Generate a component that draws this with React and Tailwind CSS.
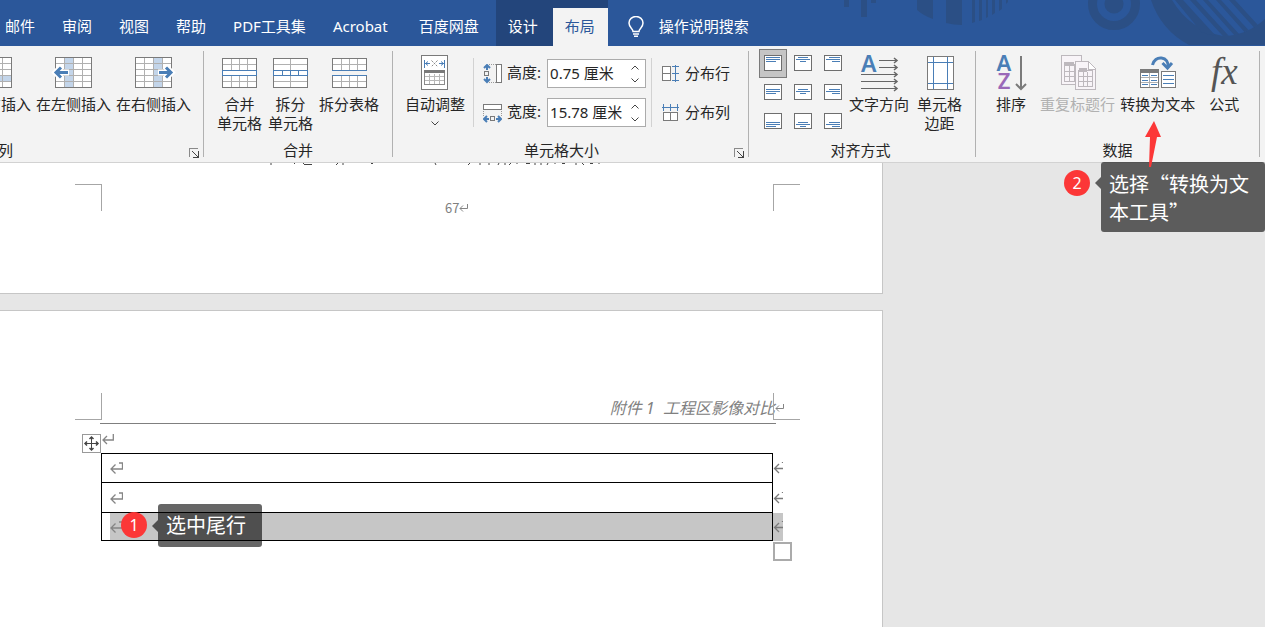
import React, { useState } from "react";

const BLUE = "#4a7eb6";
const GRAY = "#7a7a7a";

const tabs = ["邮件", "审阅", "视图", "帮助", "PDF工具集", "Acrobat", "百度网盘"];

/* ---------- ribbon icons ---------- */

const Icon = ({ children }) => (
  <svg
    width="37"
    height="39"
    viewBox="0 0 37 39"
    fill="none"
    className="block shrink-0 overflow-visible"
    aria-hidden="true"
  >
    {children}
  </svg>
);

const InsertTable = ({ children, highlight }) => (
  <Icon>
    <g shapeRendering="crispEdges">
      <rect x="0.5" y="1.5" width="36" height="30" fill="#fff" />
      {highlight}
      <path
        d="M9.5 2v29M18.5 2v29M27.5 2v29M1 7.5h35M1 13.5h35M1 19.5h35M1 25.5h35"
        stroke="#b0b0b0"
      />
      <rect x="0.5" y="1.5" width="36" height="30" stroke={GRAY} />
    </g>
    {children}
  </Icon>
);

const InsertBelowIcon = () => (
  <InsertTable highlight={<rect x="1" y="20" width="35" height="5" fill="#c3d5ea" />} />
);

const InsertLeftIcon = () => (
  <InsertTable highlight={<rect x="10" y="2" width="8" height="29" fill="#c3d5ea" />}>
    <path d="M14 16.5H2M6 11L0.5 16.5 6 22" stroke="#fff" strokeWidth="6" />
    <path d="M13 16.5H2M6 11.5l-5 5 5 5" stroke={BLUE} strokeWidth="3" />
  </InsertTable>
);

const InsertRightIcon = () => (
  <InsertTable highlight={<rect x="19" y="2" width="8" height="29" fill="#c3d5ea" />}>
    <path d="M23 16.5h12M31 11l5.5 5.5L31 22" stroke="#fff" strokeWidth="6" />
    <path d="M24 16.5h11M31 11.5l5 5-5 5" stroke={BLUE} strokeWidth="3" />
  </InsertTable>
);

const MergeCellsIcon = () => (
  <Icon>
    <g shapeRendering="crispEdges">
      <rect x="1.5" y="2.5" width="34" height="29" fill="#fff" />
      <path
        d="M10.5 3v11M18.5 3v11M26.5 3v11M10.5 20v11M18.5 20v11M26.5 20v11M2 8.5h33M2 25.5h33"
        stroke="#b0b0b0"
      />
      <rect x="1.5" y="2.5" width="34" height="29" stroke={GRAY} />
      <rect x="1.5" y="14.5" width="34" height="5" fill="#fff" stroke={BLUE} />
    </g>
  </Icon>
);

const SplitCellsIcon = () => (
  <Icon>
    <g shapeRendering="crispEdges">
      <rect x="1.5" y="2.5" width="34" height="29" fill="#fff" />
      <path d="M18.5 3v28M2 8.5h33M2 25.5h33" stroke="#b0b0b0" />
      <rect x="1.5" y="2.5" width="34" height="29" stroke={GRAY} />
      <rect x="1.5" y="14.5" width="34" height="5" fill="#fff" stroke={BLUE} />
      <path d="M10.5 15v4M18.5 15v4M26.5 15v4" stroke={BLUE} />
    </g>
  </Icon>
);

const SplitTableIcon = () => (
  <Icon>
    <g shapeRendering="crispEdges">
      <rect x="1.5" y="2.5" width="34" height="12" fill="#fff" stroke={GRAY} />
      <rect x="1.5" y="19.5" width="34" height="12" fill="#fff" stroke={GRAY} />
      <path
        d="M10.5 3v11M18.5 3v11M26.5 3v11M10.5 20v11M18.5 20v11M26.5 20v11M2 8.5h33M2 25.5h33"
        stroke="#b0b0b0"
      />
      <path d="M1 14.5h35M1 19.5h35" stroke={BLUE} />
    </g>
  </Icon>
);

const AutoFitIcon = () => (
  <Icon>
    <g shapeRendering="crispEdges">
      <rect x="4.5" y="-0.5" width="26" height="34" fill="#fff" stroke={GRAY} />
      <path d="M7.5 4v8M27.5 4v8M8 7.5h5M22 7.5h5" stroke={BLUE} />
      <rect x="7.5" y="15.5" width="20" height="13" fill="#fff" stroke="#8a8a8a" />
      <rect x="7" y="14" width="21" height="3" fill={GRAY} />
      <path d="M12.5 18v10M17.5 18v10M22.5 18v10M8 20.5h19M8 24.5h19" stroke="#b8b8b8" />
    </g>
    <path d="M11 5.5l-2.5 2 2.5 2M24 5.5l2.5 2-2.5 2" stroke={BLUE} />
    <path d="M14.5 4.5l6 6M20.5 4.5l-6 6" stroke="#888" strokeDasharray="2 1" />
  </Icon>
);

const TextDirectionIcon = () => (
  <Icon>
    <text x="0" y="16" fontSize="23" fontWeight="600" fontFamily="Noto Sans, sans-serif" fill={BLUE}>
      A
    </text>
    <path
      d="M18 4.5h18M18 11.5h18M0 18.5h36M0 25.5h36M0 32.5h36"
      stroke="#666"
      shapeRendering="crispEdges"
    />
    <path
      d="M33 2l3 2.5-3 2.5M33 9l3 2.5-3 2.5M33 16l3 2.5-3 2.5M33 23l3 2.5-3 2.5M33 30l3 2.5-3 2.5"
      stroke="#666"
      strokeWidth="1.5"
    />
  </Icon>
);

const CellMarginsIcon = () => (
  <Icon>
    <g shapeRendering="crispEdges">
      <rect x="6.5" y="0.5" width="26" height="33" fill="#fff" stroke={GRAY} />
      <path d="M12.5 1v32M26.5 1v32M7 6.5h25M7 27.5h25" stroke={BLUE} />
    </g>
  </Icon>
);

const SortIcon = () => (
  <span className="flex h-[39px] w-[37px] justify-between pl-1" aria-hidden="true">
    <span className="-mt-[3px] flex flex-col text-center text-[22px] font-semibold leading-[18px]">
      <span className="text-[#4a7eb6]">A</span>
      <span className="text-[#9a68b8]">Z</span>
    </span>
    <svg width="16" height="39" viewBox="0 0 16 39" fill="none">
      <path d="M7 0v33M2 28l5 5 5-5" stroke={GRAY} strokeWidth="2" />
    </svg>
  </span>
);

const RepeatHeaderIcon = () => (
  <Icon>
    <g shapeRendering="crispEdges" stroke="#bdb8bd">
      <path d="M2.5 -0.5h20v29h-20z" fill="#f8f4f8" />
      <path d="M5.5 8.5h10v17h-10zM10.5 10v15M6 15.5h9M6 20.5h9" />
      <path d="M5 8h10" strokeWidth="4" />
      <path d="M16.5 5.5h13l7 7v21h-20z" fill="#f8f4f8" />
      <path d="M19.5 14.5h14v16h-14zM24.5 16v14M28.5 16v14M20 20.5h13M20 25.5h13" />
      <path d="M20 14h8" strokeWidth="4" />
      <path d="M29.5 6v7h7" fill="#fff" />
    </g>
  </Icon>
);

const ConvertToTextIcon = () => (
  <Icon>
    <path d="M13.5 9c1-5 5-7.5 9-7 4.5 0.5 7 4 6.5 9" stroke={BLUE} strokeWidth="3" />
    <path d="M23.5 7l5 5 4.5-5" stroke={BLUE} strokeWidth="3" />
    <g shapeRendering="crispEdges">
      <rect x="1.5" y="14.5" width="18" height="17" fill="#fff" stroke={GRAY} />
      <rect x="1" y="13" width="19" height="4" fill={GRAY} />
      <path d="M10.5 17v14M2 21.5h17M2 26.5h17" stroke="#b0b0b0" />
      <path d="M3 19.5h6M3 24.5h6M3 28.5h6M12 19.5h6M12 24.5h6M12 28.5h6" stroke={BLUE} />
      <rect x="22.5" y="15.5" width="14" height="16" fill="#fff" stroke={GRAY} />
      <path d="M24 19.5h11M24 23.5h11M24 27.5h11" stroke={BLUE} />
    </g>
  </Icon>
);

const FormulaIcon = () => (
  <Icon>
    <text x="5" y="28" fontSize="37" fontStyle="italic" fontFamily="Liberation Serif, serif" fill="#555">
      fx
    </text>
  </Icon>
);

const HeightIcon = () => (
  <svg width="19" height="20" viewBox="0 0 19 20" fill="none" aria-hidden="true">
    <g shapeRendering="crispEdges">
      <path d="M4 1v5M4 13v5" stroke={BLUE} strokeWidth="2" />
      <rect x="1.5" y="7.5" width="4" height="4" stroke={GRAY} />
      <path d="M6 0.5h7M6 18.5h7" stroke="#999" strokeDasharray="1 1" />
      <rect x="13.5" y="0.5" width="5" height="18" fill="#fff" stroke={GRAY} />
    </g>
    <path d="M1 4l3-3 3 3M1 15l3 3 3-3" stroke={BLUE} strokeWidth="2" />
  </svg>
);

const WidthIcon = () => (
  <svg width="19" height="20" viewBox="0 0 19 20" fill="none" aria-hidden="true">
    <g shapeRendering="crispEdges">
      <rect x="0.5" y="1.5" width="18" height="5" fill="#fff" stroke={GRAY} />
      <path d="M0.5 8v6M18.5 8v6" stroke="#999" strokeDasharray="1 1" />
      <rect x="7.5" y="13.5" width="4" height="4" stroke={GRAY} />
      <path d="M1 16h5M13 16h5" stroke={BLUE} strokeWidth="2" />
    </g>
    <path d="M4 13l-3 3 3 3M15 13l3 3-3 3" stroke={BLUE} strokeWidth="2" />
  </svg>
);

const DistributeRowsIcon = () => (
  <svg width="18" height="18" viewBox="0 0 18 18" fill="none" shapeRendering="crispEdges" aria-hidden="true">
    <path d="M0.5 1.5h8v14h-8zM1 8.5h7" fill="#fff" stroke={GRAY} />
    <path d="M13.5 0v17M10 1.5h7M10 8.5h7M10 15.5h7" stroke={BLUE} />
  </svg>
);

const DistributeColsIcon = () => (
  <svg width="18" height="18" viewBox="0 0 18 18" fill="none" shapeRendering="crispEdges" aria-hidden="true">
    <path d="M1.5 8.5h14v8h-14zM8.5 9v7" fill="#fff" stroke={GRAY} />
    <path d="M0 3.5h17M1.5 0v7M8.5 0v7M15.5 0v7" stroke={BLUE} />
  </svg>
);

const lineTop = { top: 2, middle: 5, bottom: 9 };
const lineWidths = {
  left: [14, 14, 10],
  center: [10, 14, 6],
  right: [11, 14, 8],
};

const AlignIcon = ({ v, h }) => {
  const lines = lineWidths[h].map((len, i) => {
    const x = h === "left" ? 2 : h === "center" ? 9 - len / 2 : 16 - len;
    return `M${x} ${lineTop[v] + i * 2 + 0.5}h${len}`;
  });
  return (
    <svg width="18" height="16" viewBox="0 0 18 16" fill="none" shapeRendering="crispEdges" aria-hidden="true">
      <rect x="0.5" y="0.5" width="17" height="15" fill="#fff" stroke="#6e6e6e" />
      <path d={lines.join("")} stroke={BLUE} />
    </svg>
  );
};

const Chevron = ({ up }) => (
  <svg width="8" height="5" viewBox="0 0 8 5" fill="none" aria-hidden="true">
    <path d={up ? "M0.5 4.5L4 1l3.5 3.5" : "M0.5 0.5L4 4l3.5-3.5"} stroke="#444" />
  </svg>
);

/* ---------- ribbon parts ---------- */

const BigButton = ({ icon, lines, disabled, dropDown }) => (
  <button
    type="button"
    disabled={disabled}
    className="flex h-full flex-col items-center pt-[10px] leading-[19px] whitespace-nowrap disabled:text-[#b1b1b1]"
  >
    {icon}
    {lines.map((line) => (
      <span key={line}>{line}</span>
    ))}
    {dropDown && (
      <span className="flex h-[19px] items-center">
        <Chevron />
      </span>
    )}
  </button>
);

const Group = ({ label, launcher, className = "", children }) => (
  <section className="flex shrink-0" aria-label={label}>
    <div className={`flex flex-col ${className}`}>
      <div className="flex h-[94px]">{children}</div>
      <div className="text-center leading-5">{label}</div>
    </div>
    {launcher && (
      <button type="button" aria-label={`${label}设置`} className="-ml-[14px] mt-[102px] h-[10px] w-[14px]">
        <svg width="10" height="10" viewBox="0 0 10 10" fill="none" shapeRendering="crispEdges">
          <path d="M0.5 9V0.5H9" stroke="#8a8a8a" />
          <path d="M9.5 3v6.5H4M3 3l6 6" stroke="#444" />
        </svg>
      </button>
    )}
    <div className="mt-[5px] h-[106px] w-px bg-[#b1b1b1]" />
  </section>
);

const SizeField = ({ id, icon, label, value }) => {
  const [size, setSize] = useState(value);
  return (
    <div className="flex h-[39px] items-center">
      {icon}
      <label htmlFor={id} className="ml-[5px] w-10 whitespace-nowrap pb-[2px]">
        {label}
      </label>
      <div className="flex h-[29px] w-[99px] items-center border border-[#ababab] bg-white">
        <input
          id={id}
          value={size}
          onChange={(e) => setSize(e.target.value)}
          className="h-full w-[83px] min-w-0 bg-transparent pb-[2px] pl-[2px] outline-none"
        />
        <span className="flex flex-col gap-2">
          <button type="button" aria-label="增加" className="flex">
            <Chevron up />
          </button>
          <button type="button" aria-label="减少" className="flex">
            <Chevron />
          </button>
        </span>
      </div>
    </div>
  );
};

const SmallButton = ({ icon, label }) => (
  <button type="button" className="flex h-[39px] items-center gap-[5px] whitespace-nowrap">
    {icon}
    {label}
  </button>
);

const HeaderArt = () => (
  <svg width="425" height="46" viewBox="0 0 425 46" fill="#2b4f85" className="absolute right-0 top-0" aria-hidden="true">
    <defs>
      <clipPath id="disc">
        <circle cx="383" cy="-24" r="60" />
      </clipPath>
    </defs>
    <path d="M4 0h5v7H4zM21 0h6v17h-6zM31 0h5v3h-5z" />
    <path d="M77 0h16v19q-9-3-16-9zM106 0h16v25q-8 0-16-2z" />
    <path d="M132 0h3v22l-3 1zM139 0h3v20l-3 1zM146 0h2v17l-2 1zM152 0h3v13l-3 2zM159 0h3v9l-3 2zM166 0h2v2l-2 2z" />
    <circle cx="274" cy="4" r="21.5" fill="none" stroke="#2b4f85" strokeWidth="9" />
    <circle cx="274" cy="4" r="9.5" />
    <path d="M311 0Q321 30 349 45h76V19Q406 36 383 36Q350 30 332 0z" />
    <g clipPath="url(#disc)">
      <path d="M335 0h8l42 46h-12zM350 0h6l42 46h-6zM363 0h5l42 46h-6zM376 0h5l42 46h-6zM389 0h6l42 46h-6z" />
    </g>
  </svg>
);

/* ---------- document parts ---------- */

const CropMark = ({ d }) => (
  <svg width="27" height="27" viewBox="0 0 27 27" fill="none" shapeRendering="crispEdges" aria-hidden="true">
    <path d={d} stroke="#a6a6a6" />
  </svg>
);

const ReturnMark = () => (
  <svg width="13" height="12" viewBox="0 0 13 12" fill="none" stroke="#858585" strokeWidth="1.3" aria-hidden="true">
    <path d="M9 1h3.5v6H1M5.5 2.5L1 7l4.5 4.5" />
  </svg>
);

const ParagraphMark = () => (
  <svg
    width="12"
    height="11"
    viewBox="0 0 12 11"
    fill="none"
    stroke="#858585"
    strokeWidth="1.3"
    className="shrink-0"
    aria-hidden="true"
  >
    <path d="M11.3 0v6H1M5 2L1 6l4 4" />
  </svg>
);

const SmallParagraphMark = () => (
  <svg width="9" height="8" viewBox="0 0 9 8" fill="none" stroke="#858585" className="shrink-0" aria-hidden="true">
    <path d="M8.5 0v4.5H1M4 1.5l-3 3 3 3" />
  </svg>
);

const RowEndMark = () => (
  <svg width="10" height="12" viewBox="0 0 10 12" fill="none" stroke="#7a7a7a" strokeWidth="1.3" aria-hidden="true">
    <path d="M10 6.5H1.5M6 2L1.5 6.5 6 11M9.5 0v1" />
  </svg>
);

const Callout = ({ className, children }) => (
  <div className={`absolute flex items-center text-xl leading-7 text-white ${className}`}>
    <span className="h-0 w-0 shrink-0 border-y-[6px] border-r-[6px] border-y-transparent border-r-black/60" />
    <p className="flex-1 rounded-[3px] bg-black/60 px-2 pb-[7px] pt-2">{children}</p>
  </div>
);

const Badge = ({ className, children }) => (
  <span
    className={`absolute flex h-[26px] w-[26px] items-center justify-center rounded-full bg-[#fc3737] text-base leading-none text-white ${className}`}
  >
    {children}
  </span>
);

const alignments = ["top", "middle", "bottom"].flatMap((v) =>
  ["left", "center", "right"].map((h) => ({ v, h }))
);

const rows = [
  { height: "h-[30px]", selected: false, first: true },
  { height: "h-[30px]", selected: false },
  { height: "h-[28px]", selected: true },
];

const App = () => {
  const [align, setAlign] = useState("top-left");

  return (
    <div className="relative flex h-screen flex-col overflow-hidden bg-[#e6e6e6] font-['Noto_Sans','Noto_Sans_CJK_SC',sans-serif] text-[15px] text-[#262626]">
      <header className="relative h-[46px] shrink-0 bg-[#2b579a] text-white">
        <HeaderArt />
        <nav className="relative -ml-[7px] flex h-full items-end gap-[3px] whitespace-nowrap leading-9">
          {tabs.map((tab) => (
            <a key={tab} href="#" className={`pb-[2px] pl-3 ${tab === "Acrobat" ? "pr-4" : "pr-3"}`}>
              {tab}
            </a>
          ))}
          <div className="ml-[2px] flex h-full items-end bg-[#23457b]">
            <a href="#" className="pb-[2px] pl-3 pr-[15px]">
              设计
            </a>
            <a href="#" aria-current="page" className="bg-[#f3f3f3] pb-[2px] pl-3 pr-[13px] text-[#2b579a]">
              布局
            </a>
          </div>
          <button type="button" className="ml-[17px] flex items-center gap-[15px] pb-[2px]">
            <svg width="16" height="21" viewBox="0 0 16 21" fill="none" stroke="#fff" strokeWidth="1.5" aria-hidden="true">
              <path d="M5 15.5c0-3-4-4-4-8.5a7 6.5 0 0 1 14 0c0 4.5-4 5.5-4 8.5z" />
              <path d="M5 18h6M6 20.2h4" />
            </svg>
            操作说明搜索
          </button>
        </nav>
      </header>

      <div className="flex h-[117px] shrink-0 border-b border-[#d2d2d2] bg-[#f3f3f3]">
        <div className="-ml-[202px] flex">
          <Group label="行和列" launcher className="w-[405px] pr-5 [&>div:first-child]:-mr-2">
            <div className="flex flex-1 justify-end gap-[5px]">
              <BigButton icon={<InsertBelowIcon />} lines={["在下方插入"]} />
              <BigButton icon={<InsertLeftIcon />} lines={["在左侧插入"]} />
              <BigButton icon={<InsertRightIcon />} lines={["在右侧插入"]} />
            </div>
          </Group>
        </div>

        <Group label="合并" className="px-[13px]">
          <div className="flex gap-[6px]">
            <BigButton icon={<MergeCellsIcon />} lines={["合并", "单元格"]} />
            <BigButton icon={<SplitCellsIcon />} lines={["拆分", "单元格"]} />
            <BigButton icon={<SplitTableIcon />} lines={["拆分表格"]} />
          </div>
        </Group>

        <Group label="单元格大小" launcher className="pr-[18px]">
          <div className="flex pl-3">
            <BigButton icon={<AutoFitIcon />} lines={["自动调整"]} dropDown />
          </div>
          <div className="ml-2 mt-3 h-[69px] w-px bg-[#d2d2d2]" />
          <div className="ml-[9px] flex flex-col pt-2">
            <SizeField id="row-height" icon={<HeightIcon />} label="高度:" value="0.75 厘米" />
            <SizeField id="col-width" icon={<WidthIcon />} label="宽度:" value="15.78 厘米" />
          </div>
          <div className="ml-[5px] mt-3 h-[69px] w-px bg-[#d2d2d2]" />
          <div className="ml-[10px] flex flex-col pt-2">
            <SmallButton icon={<DistributeRowsIcon />} label="分布行" />
            <SmallButton icon={<DistributeColsIcon />} label="分布列" />
          </div>
        </Group>

        <Group label="对齐方式" className="pl-[10px] pr-[13px]">
          <div className="grid grid-cols-3 content-start gap-x-[2px] pt-[3px]">
            {alignments.map(({ v, h }) => {
              const key = `${v}-${h}`;
              return (
                <button
                  key={key}
                  type="button"
                  aria-label={key}
                  aria-pressed={align === key}
                  onClick={() => setAlign(key)}
                  className="flex h-[29px] w-7 items-start justify-center border border-transparent pt-[5px] aria-pressed:border-[#7a7a7a] aria-pressed:bg-[#c5c5c5]"
                >
                  <AlignIcon v={v} h={h} />
                </button>
              );
            })}
          </div>
          <div className="ml-[2px] flex gap-2">
            <BigButton icon={<TextDirectionIcon />} lines={["文字方向"]} />
            <BigButton icon={<CellMarginsIcon />} lines={["单元格", "边距"]} />
          </div>
        </Group>

        <Group label="数据" className="px-[11px]">
          <div className="flex gap-[5px]">
            <div className="flex w-12 justify-center">
              <BigButton icon={<SortIcon />} lines={["排序"]} />
            </div>
            <BigButton icon={<RepeatHeaderIcon />} lines={["重复标题行"]} disabled />
            <BigButton icon={<ConvertToTextIcon />} lines={["转换为文本"]} />
            <div className="flex w-12 justify-center">
              <BigButton icon={<FormulaIcon />} lines={["公式"]} />
            </div>
          </div>
        </Group>
      </div>

      <main className="flex flex-1 flex-col gap-4 text-[#808080]">
        <article className="h-[131px] w-[883px] shrink-0 border-b border-r border-[#c6c6c6] bg-white">
          {/* feet of the last text line, scrolled under the ribbon */}
          <svg width="800" height="21" viewBox="0 0 800 21" fill="none" className="block" aria-hidden="true">
            <path
              d="M271 0v2M295 0l-1 1M304 1.5h8M303 0l1 1M338 0l-2 2M343 0v2M371 0.5h2M435 0l1 2M470 0l-2 2M480 0v2M489 0v2M499 0l-1 2M505 0v2M511 0l-2 2M517 0v1M526 0.5h4M535 0v2M541 0v2M548 0l-1 2M555 0v1M562 0.5h3M576 0v2M582 0l2 2M590 0.5h3M599 0v1"
              stroke="#444"
            />
          </svg>
          <div className="flex w-[800px] pl-[75px]">
            <CropMark d="M0 0.5h26.5V27" />
            <div className="flex flex-1 items-center self-start pl-[343px] pt-[18px] font-['Noto_Sans_CJK_SC',sans-serif] text-[13px] leading-3">
              67
              <SmallParagraphMark />
            </div>
            <CropMark d="M27 0.5H0.5V27" />
          </div>
        </article>

        <article className="w-[883px] flex-1 border-r border-t border-[#c6c6c6] bg-white">
          <div className="flex h-[109px] w-[800px] items-end pl-[75px]">
            <CropMark d="M0 26.5h26.5V0" />
            <div className="-mr-[11px] flex flex-1 items-center justify-end text-base leading-6 italic">
              附件 1 &nbsp;工程区影像对比
              <SmallParagraphMark />
            </div>
            <CropMark d="M27 26.5H0.5V0" />
          </div>
          <div className="ml-[100px] mt-[3px] h-px w-[676px] bg-[#7f7f7f]" />

          <div className="flex h-[29px] gap-px pl-[82px] pt-[10px]">
            <svg width="19" height="19" viewBox="0 0 19 19" fill="none" aria-hidden="true">
              <rect x="0.5" y="0.5" width="18" height="18" fill="#fff" stroke="#999" />
              <path d="M9.5 3v13M3 9.5h13" stroke="#444" />
              <path
                d="M7.5 5l2-2 2 2M7.5 14l2 2 2-2M5 7.5l-2 2 2 2M14 7.5l2 2-2 2"
                stroke="#444"
                strokeWidth="1.5"
              />
            </svg>
            <ParagraphMark />
          </div>

          <table className="ml-[101px] border-separate border-spacing-0">
            <tbody>
              {rows.map((row, i) => (
                <tr key={i} className={row.height}>
                  <td
                    className={`w-[672px] border-x border-b border-black p-0 pl-2 ${row.first ? "border-t" : ""}`}
                  >
                    <div className={`flex items-center ${row.selected ? "h-[27px] bg-[#c6c6c6]" : "h-5"}`}>
                      <ReturnMark />
                    </div>
                  </td>
                  <td className={`w-[10px] p-0 ${row.selected ? "bg-[#c6c6c6]" : ""}`}>
                    <RowEndMark />
                  </td>
                </tr>
              ))}
            </tbody>
          </table>
          <div className="ml-[773px] mt-px h-[19px] w-[19px] border-2 border-[#ababab] bg-white" />
        </article>
      </main>

      {/* step callouts */}
      <Badge className="left-[121px] top-[512px]">1</Badge>
      <Callout className="left-[152px] top-[504px] w-[110px] whitespace-nowrap">选中尾行</Callout>

      <Badge className="left-[1064px] top-[170px]">2</Badge>
      <Callout className="left-[1095px] top-[162px] w-[170px] font-['Noto_Sans_CJK_SC',sans-serif] [&>p]:pb-[6px] [&>span]:mb-7">
        选择“转换为文本工具”
      </Callout>
      <svg width="18" height="46" viewBox="0 0 18 46" className="absolute left-[1145px] top-[121px]" aria-hidden="true">
        <path d="M9 0L16 16l-4 0L6 46H4L5 16H0z" fill="#fc3737" />
      </svg>
    </div>
  );
};

export default App;
